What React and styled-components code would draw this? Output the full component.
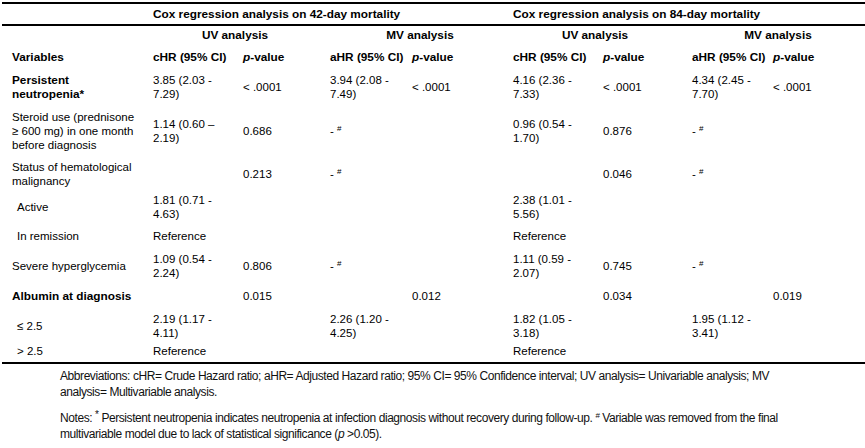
import React from 'react';
import styled, { createGlobalStyle } from 'styled-components';

const Global = createGlobalStyle`
  html, body { margin: 0; padding: 0; background: #fff; }
  body { font-family: "Liberation Sans", Arial, sans-serif; color: #000; }
`;

const COLS = '141px 90px 87px 82px 101px 90px 89px 81px 1fr';

const Page = styled.div`
  width: 865px;
  height: 448px;
  overflow: hidden;
`;

const Table = styled.div`
  margin: 2px 0 0 2px;
  border-top: 2px solid #000;
  border-bottom: 2px solid #000;
  padding-bottom: 6px;
`;

const Row = styled.div`
  display: grid;
  grid-template-columns: ${COLS};
  padding-left: 10px;
  height: ${(p) => p.$h}px;
  align-items: center;
  font-size: ${(p) => (p.$bold ? 11.8 : 11.5)}px;
  line-height: 14px;
  font-weight: ${(p) => (p.$bold ? 700 : 400)};
  border-bottom: ${(p) => (p.$rule ? '2px solid #000' : 'none')};
`;

const Span = styled.div`
  grid-column: ${(p) => p.$col} / span ${(p) => p.$span};
  text-align: ${(p) => (p.$center ? 'center' : 'left')};
  padding-right: ${(p) => p.$pr || 0}px;
  white-space: nowrap;
`;

const Cell = styled.div`
  white-space: nowrap;
  font-weight: ${(p) => (p.$bold ? 700 : 400)};
  font-size: ${(p) => (p.$bold ? '11.8px' : 'inherit')};
  padding-left: ${(p) => (p.$indent ? 5 : 0)}px;
`;

const Sup = styled.sup`
  font-size: ${(p) => p.$size || 8}px;
  line-height: 0;
  vertical-align: 4px;
`;

const Notes = styled.div`
  margin: 4px 0 0 60px;
  font-family: "Liberation Sans", Arial, sans-serif;
  font-size: 12px;
  letter-spacing: -0.43px;
  line-height: 16px;
  color: #111;
`;

const Para = styled.p`
  margin: 0 0 10px 0;
`;

const DASH = 'DASH';

const rows = [
  {
    h: 34,
    bold: true,
    label: ['Persistent', 'neutropenia*'],
    cells: [['3.85 (2.03 -', '7.29)'], '< .0001', ['3.94 (2.08 -', '7.49)'], '< .0001', ['4.16 (2.36 -', '7.33)'], '< .0001', ['4.34 (2.45 -', '7.70)'], '< .0001'],
  },
  {
    h: 54,
    label: ['Steroid use (prednisone', '\u2265 600 mg) in one month', 'before diagnosis'],
    cells: [['1.14 (0.60 \u2013', '2.19)'], '0.686', DASH, '', ['0.96 (0.54 -', '1.70)'], '0.876', DASH, ''],
  },
  {
    h: 32,
    label: ['Status of hematological', 'malignancy'],
    cells: ['', '0.213', DASH, '', '', '0.046', DASH, ''],
  },
  {
    h: 34,
    indent: true,
    label: ['Active'],
    cells: [['1.81 (0.71 -', '4.63)'], '', '', '', ['2.38 (1.01 -', '5.56)'], '', '', ''],
  },
  {
    h: 24,
    indent: true,
    label: ['In remission'],
    cells: ['Reference', '', '', '', 'Reference', '', '', ''],
  },
  {
    h: 36,
    label: ['Severe hyperglycemia'],
    cells: [['1.09 (0.54 -', '2.24)'], '0.806', DASH, '', ['1.11 (0.59 -', '2.07)'], '0.745', DASH, ''],
  },
  {
    h: 24,
    bold: true,
    label: ['Albumin at diagnosis'],
    cells: ['', '0.015', '', '0.012', '', '0.034', '', '0.019'],
  },
  {
    h: 36,
    indent: true,
    label: ['\u2264 2.5'],
    cells: [['2.19 (1.17 -', '4.11)'], '', ['2.26 (1.20 -', '4.25)'], '', ['1.82 (1.05 -', '3.18)'], '', ['1.95 (1.12 -', '3.41)'], ''],
  },
  {
    h: 12,
    indent: true,
    label: ['> 2.5'],
    cells: ['Reference', '', '', '', 'Reference', '', '', ''],
  },
];

const Lines = ({ lines }) =>
  lines.map((l, i) => (
    <React.Fragment key={i}>
      {i > 0 && <br />}
      {l}
    </React.Fragment>
  ));

const Value = ({ v }) => {
  if (v === DASH)
    return (
      <Cell>
        - <Sup>#</Sup>
      </Cell>
    );
  if (Array.isArray(v))
    return (
      <Cell>
        <Lines lines={v} />
      </Cell>
    );
  return <Cell>{v}</Cell>;
};

const PHead = () => (
  <Cell $bold>
    <i>p</i>-value
  </Cell>
);

export default function App() {
  return (
    <Page>
      <Global />
      <Table>
        <Row $h={20} $bold $rule>
          <Span $col={2} $span={4}>Cox regression analysis on 42-day mortality</Span>
          <Span $col={6} $span={4}>Cox regression analysis on 84-day mortality</Span>
        </Row>
        <Row $h={18} $bold>
          <Span $col={2} $span={2} $center $pr={13}>UV analysis</Span>
          <Span $col={4} $span={2} $center $pr={3}>MV analysis</Span>
          <Span $col={6} $span={2} $center $pr={15}>UV analysis</Span>
          <Span $col={8} $span={2} $center $pr={1}>MV analysis</Span>
        </Row>
        <Row $h={26} $bold>
          <Cell $bold>Variables</Cell>
          <Cell $bold>cHR (95% CI)</Cell>
          <PHead />
          <Cell $bold>aHR (95% CI)</Cell>
          <PHead />
          <Cell $bold>cHR (95% CI)</Cell>
          <PHead />
          <Cell $bold>aHR (95% CI)</Cell>
          <PHead />
        </Row>
        {rows.map((r, i) => (
          <Row key={i} $h={r.h}>
            <Cell $bold={r.bold} $indent={r.indent}>
              <Lines lines={r.label} />
            </Cell>
            {r.cells.map((c, j) => (
              <Value key={j} v={c} />
            ))}
          </Row>
        ))}
      </Table>
      <Notes>
        <Para>
          Abbreviations: cHR= Crude Hazard ratio; aHR= Adjusted Hazard ratio; 95% CI= 95% Confidence interval; UV analysis= Univariable analysis; MV
          <br />
          analysis= Multivariable analysis.
        </Para>
        <Para>
          Notes: <Sup $size={10}>*</Sup> Persistent neutropenia indicates neutropenia at infection diagnosis without recovery during follow-up. <Sup>#</Sup> Variable was removed from the final
          <br />
          multivariable model due to lack of statistical significance (<i>p</i> &gt;0.05).
        </Para>
      </Notes>
    </Page>
  );
}
